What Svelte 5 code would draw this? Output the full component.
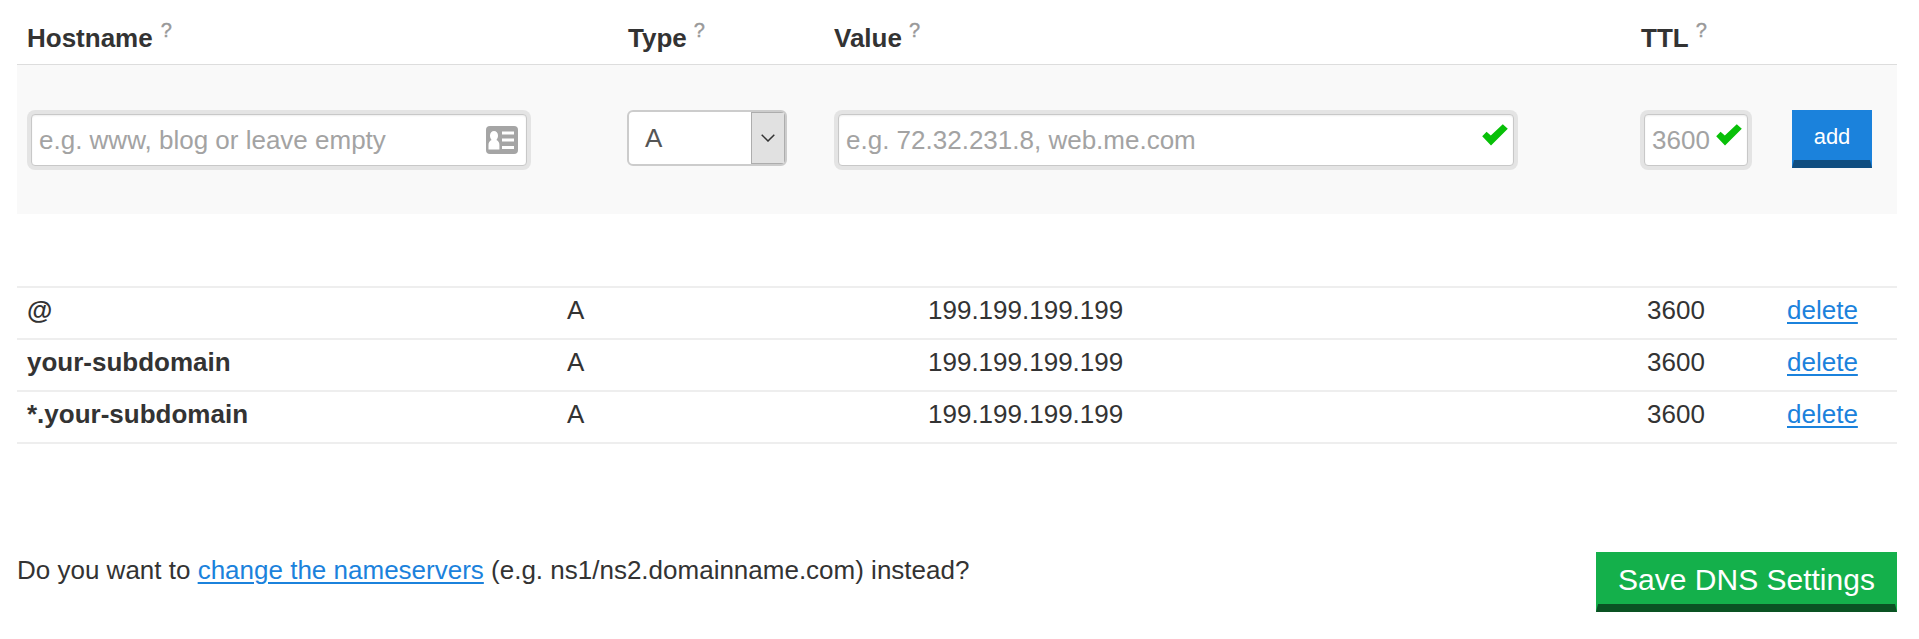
<script>
  const columns = ['Hostname', 'Type', 'Value', 'TTL'];
  const records = [
    { host: '@', type: 'A', value: '199.199.199.199', ttl: 3600 },
    { host: 'your-subdomain', type: 'A', value: '199.199.199.199', ttl: 3600 },
    { host: '*.your-subdomain', type: 'A', value: '199.199.199.199', ttl: 3600 }
  ];
</script>

{#snippet check()}
  <svg class="check" width="26" height="22" viewBox="0 0 26 22">
    <path d="M0.2 12.2 L4.600 7.800 L8.800 11.500 L20.800 0.200 L25.800 4.800 L9 21.600 Z" fill="#08c008" />
  </svg>
{/snippet}

<main>
  <div class="head cols">
    {#each columns as name}
      <div class="th">{name}<span class="help">?</span></div>
    {/each}
  </div>

  <div class="entry cols">
    <div class="field host">
      <span>e.g. www, blog or leave empty</span>
      <svg class="card" width="32" height="28" viewBox="0 0 32 28">
        <rect width="32" height="28" rx="4" fill="#a5a5a5" />
        <path d="M8 5a4 4.600 0 0 1 4 4.600c0 2-.700 3.400-1.600 4.400 2 .900 3 2.500 3 5V23.500H2.500V19c0-2.500 1-4.100 3.100-5C4.700 13 4 11.600 4 9.600A4 4.600 0 0 1 8 5z" fill="#fff" />
        <path d="M16 5.500h12v3H16zM16 12.500h12v3H16zM16 20h12v3H16z" fill="#fff" />
      </svg>
    </div>
    <div class="select">
      <span>A</span>
      <div class="arrow">
        <svg width="14" height="8" viewBox="0 0 14 8"><path d="M0.700 0.700 L7 7 L13.300 0.700" fill="none" stroke="#333" stroke-width="1.500" /></svg>
      </div>
    </div>
    <div class="field value"><span>e.g. 72.32.231.8, web.me.com</span>{@render check()}</div>
    <div class="field ttl"><span>3600</span>{@render check()}</div>
    <button class="add">add</button>
  </div>

  <div class="records">
    {#each records as r}
      <div class="row">
        <b>{r.host}</b>
        <span>{r.type}</span>
        <span>{r.value}</span>
        <span>{r.ttl}</span>
        <span><a href="#delete">delete</a></span>
      </div>
    {/each}
  </div>

  <footer>
    <p>Do you want to <a href="#nameservers">change the nameservers</a> (e.g. ns1/ns2.domainname.com) instead?</p>
    <button class="save">Save DNS Settings</button>
  </footer>
</main>

<style>
  :global(body) {
    margin: 0;
    background: #fff;
  }
  main {
    box-sizing: border-box;
    width: 1919px;
    height: 639px;
    overflow: hidden;
    padding: 0 22px 0 17px;
    color: #333;
    font: 26px/30px 'Liberation Sans', Arial, sans-serif;
  }
  .cols {
    display: grid;
    grid-template-columns: 600px 207px 806px 152px 1fr;
    padding-left: 10px;
  }
  .head {
    height: 64px;
    border-bottom: 1px solid #ddd;
    font-weight: bold;
  }
  .th {
    padding-top: 23px;
    white-space: nowrap;
  }
  .th:nth-child(2),
  .th:nth-child(4) { padding-left: 1px; }
  .help {
    display: inline-block;
    margin-left: 8px;
    color: #999;
    font-size: 20px;
    font-weight: normal;
    line-height: 20px;
    -webkit-text-stroke: 0.4px #999;
    transform: translateY(-10px);
  }
  .th:nth-child(2) .help,
  .th:nth-child(3) .help,
  .th:nth-child(4) .help { margin-left: 7px; }
  .entry {
    height: 104px;
    padding-top: 45px;
    background: #f9f9f9;
    align-items: start;
  }
  .field {
    box-sizing: border-box;
    display: flex;
    align-items: center;
    justify-content: space-between;
    height: 52px;
    margin: 4px;
    padding: 0 8px 0 7px;
    border: 1px solid #c8c8c8;
    border-radius: 4px;
    box-shadow: 0 0 0 4px #e4e4e4, inset 0 1px 2px #eee;
    background: #fff;
    color: #a3a3a3;
    white-space: nowrap;
  }
  .host { width: 496px; }
  .value { width: 676px; padding-right: 5px; }
  .ttl { width: 104px; padding-right: 5px; }
  .check { margin-bottom: 10px; flex: none; }
  .select {
    box-sizing: border-box;
    display: flex;
    justify-content: space-between;
    width: 160px;
    height: 56px;
    border: 2px solid #ccc;
    border-radius: 6px;
    background: #fff;
    color: #555;
    overflow: hidden;
  }
  .select span { padding: 11px 0 0 16px; }
  .arrow {
    box-sizing: border-box;
    display: grid;
    place-items: center;
    width: 34px;
    border: 1px solid #adadad;
    background: #e1e1e1;
  }
  button {
    box-sizing: border-box;
    padding: 0;
    border-style: solid;
    border-width: 0 2px 8px;
    color: #fff;
    font-family: inherit;
  }
  .add {
    width: 80px;
    height: 58px;
    padding-top: 3px;
    background: #1b82dc;
    border-color: #1b82dc #1b82dc #104e80;
    font-size: 22px;
  }
  .records {
    margin-top: 72px;
    border-top: 2px solid #eee;
  }
  .row {
    display: grid;
    grid-template-columns: 540px 361px 719px 140px 1fr;
    height: 43px;
    padding: 7px 0 0 10px;
    border-bottom: 2px solid #eee;
  }
  a {
    color: #1b82dc;
    text-decoration: underline;
    text-decoration-thickness: 2px;
    text-underline-offset: 3px;
  }
  footer {
    display: flex;
    justify-content: space-between;
    margin-top: 108px;
  }
  p { margin: 3px 0 0; }
  .save {
    width: 301px;
    height: 60px;
    padding-top: 4px;
    background: #14b04b;
    border-color: #14b04b #14b04b #0a5223;
    font-size: 30px;
  }
</style>
